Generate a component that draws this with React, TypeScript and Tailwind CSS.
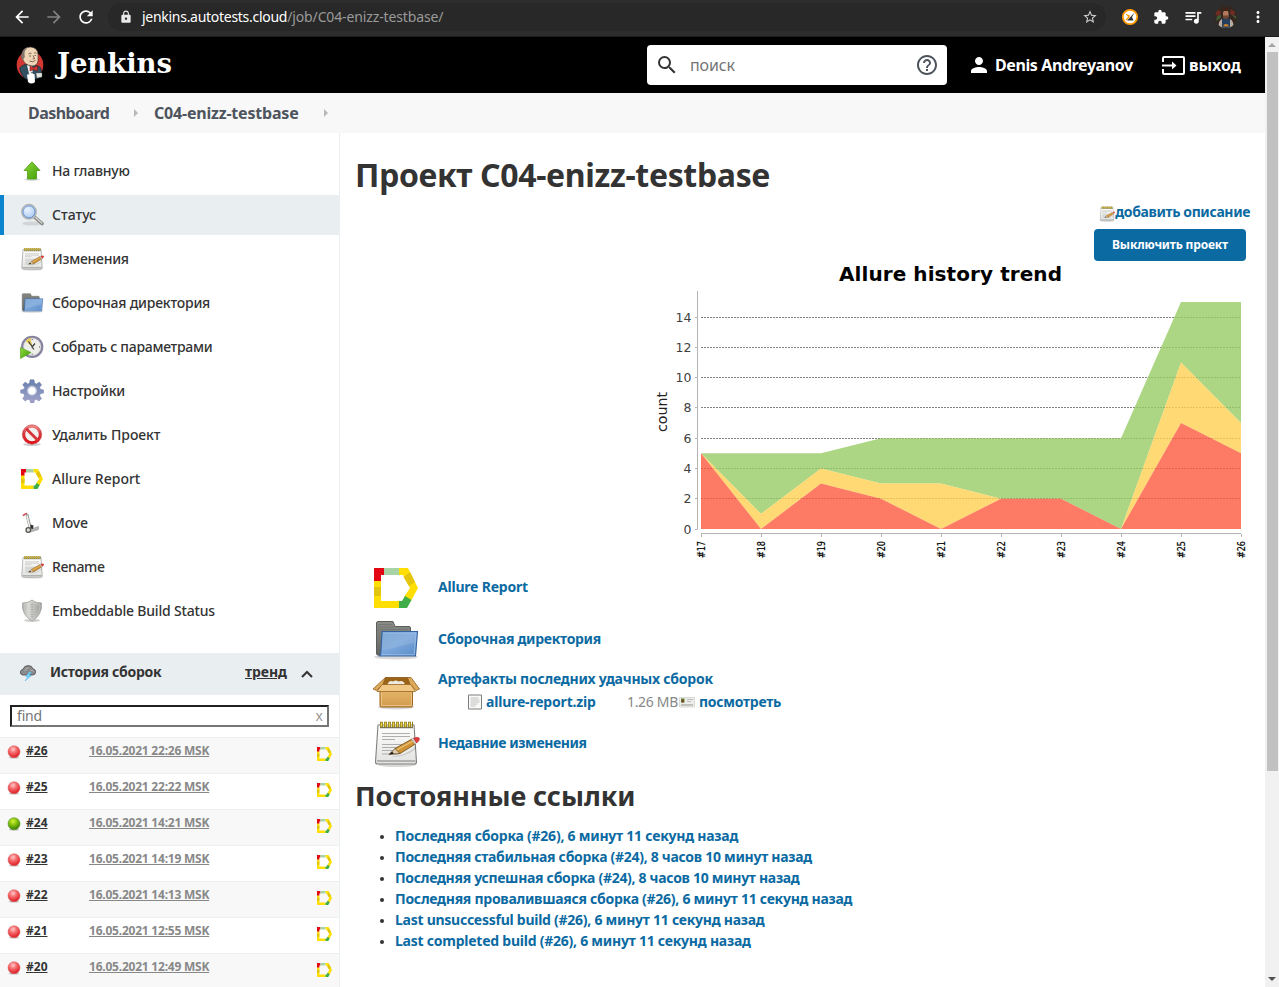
import React from "react";
import type { ReactNode } from "react";
import {
  MdArrowBack,
  MdArrowForward,
  MdRefresh,
  MdLock,
  MdStarBorder,
  MdExtension,
  MdQueueMusic,
  MdMoreVert,
  MdPerson,
  MdSearch,
  MdHelpOutline,
} from "react-icons/md";

/* ---------- shared gradients ---------- */

function Gradients() {
  return (
    <svg className="absolute size-0" aria-hidden="true">
      <defs>
        <linearGradient id="gBlue" x1="0" y1="0" x2="1" y2="1">
          <stop offset="0" stopColor="#729fcf" />
          <stop offset="0.5" stopColor="#7aa6db" />
          <stop offset="1" stopColor="#5b8cc8" />
        </linearGradient>
        <linearGradient id="gDark" x1="0" y1="0" x2="0" y2="1">
          <stop offset="0" stopColor="#8b8d89" />
          <stop offset="1" stopColor="#626461" />
        </linearGradient>
        <linearGradient id="gGreen" x1="0" y1="0" x2="1" y2="1">
          <stop offset="0" stopColor="#8fdc3c" />
          <stop offset="1" stopColor="#3f9a06" />
        </linearGradient>
        <linearGradient id="gPaper" x1="0" y1="0" x2="0" y2="1">
          <stop offset="0" stopColor="#ffffff" />
          <stop offset="1" stopColor="#e2e2e0" />
        </linearGradient>
        <linearGradient id="gRed" x1="0" y1="0" x2="0" y2="1">
          <stop offset="0" stopColor="#ee8585" />
          <stop offset="0.45" stopColor="#d63a3e" />
          <stop offset="1" stopColor="#e01218" />
        </linearGradient>
        <linearGradient id="gBox" x1="0" y1="0" x2="0" y2="1">
          <stop offset="0" stopColor="#e9b96e" />
          <stop offset="1" stopColor="#d19a4c" />
        </linearGradient>
        <linearGradient id="gShield" x1="0" y1="0" x2="1" y2="0">
          <stop offset="0" stopColor="#a3a59f" />
          <stop offset="0.3" stopColor="#d9dad7" />
          <stop offset="1" stopColor="#9c9d98" />
        </linearGradient>
        <linearGradient id="gGear" x1="0" y1="0" x2="0" y2="1">
          <stop offset="0" stopColor="#6780ae" />
          <stop offset="1" stopColor="#a4a3cb" />
        </linearGradient>
        <radialGradient id="gLens" cx="0.4" cy="0.35" r="0.7">
          <stop offset="0" stopColor="#eaf3fe" />
          <stop offset="1" stopColor="#a3c4f0" />
        </radialGradient>
        <radialGradient id="gBallRed" cx="0.42" cy="0.3" r="0.7">
          <stop offset="0" stopColor="#ffc9c9" />
          <stop offset="0.45" stopColor="#f5686a" />
          <stop offset="1" stopColor="#dd1a1f" />
        </radialGradient>
        <radialGradient id="gBallGreen" cx="0.42" cy="0.3" r="0.7">
          <stop offset="0" stopColor="#d8f23a" />
          <stop offset="0.45" stopColor="#86c40c" />
          <stop offset="1" stopColor="#397d04" />
        </radialGradient>
      </defs>
    </svg>
  );
}

/* ---------- icons ---------- */

type IconProps = { className?: string };

function AllureIcon({ className }: IconProps) {
  return (
    <svg viewBox="0 0 44 40" className={className} preserveAspectRatio="none">
      <path d="M0 12h7v21h18v7H0z" fill="#ffde03" />
      <path d="M0 19h7v9H0z" fill="#e3c510" />
      <path d="M0 0h10v7H7v6H0z" fill="#e30613" />
      <path d="M10 0h15v7H10z" fill="#a7d3a6" />
      <path d="M25 0h9l10 20-7 13-7-4 6-9-7-13h-4z" fill="#ffde03" />
      <path d="M36 4l5 10-6 4-5.500-9z" fill="#e3c510" />
      <path d="M37.500 32L33 40h-8v-7h3l3-5z" fill="#3fae49" />
    </svg>
  );
}

function UpIcon({ className }: IconProps) {
  return (
    <svg viewBox="0 0 24 24" className={className}>
      <ellipse cx="12" cy="20.500" rx="8" ry="1.400" fill="#000" opacity="0.14" />
      <path d="M12 2.800L4 11.500H7.500V20H16.500V11.500H20Z" fill="url(#gGreen)" stroke="#4c9c12" strokeWidth="0.8" />
    </svg>
  );
}

function LensIcon({ className }: IconProps) {
  return (
    <svg viewBox="0 0 24 24" className={className}>
      <ellipse cx="12" cy="20.500" rx="10" ry="2" fill="#000" opacity="0.1" />
      <path d="M15 14.500l7 6" stroke="#858783" strokeWidth="3.600" strokeLinecap="round" />
      <path d="M15.500 14.500l6.300 5.500" stroke="#d0d1ce" strokeWidth="1.600" strokeLinecap="round" />
      <circle cx="9" cy="8.800" r="7.200" fill="url(#gLens)" stroke="#b4b6b2" strokeWidth="1.500" />
      <circle cx="9" cy="8.800" r="6" fill="none" stroke="#5f8bd0" strokeWidth="0.900" />
    </svg>
  );
}

function NotepadIcon({ className }: IconProps) {
  return (
    <svg viewBox="0 0 48 48" className={className}>
      <ellipse cx="25" cy="45" rx="19" ry="2" fill="#000" opacity="0.15" />
      <path d="M6 5h36l2.500 37q0 2-2 2H5.500q-2 0-2-2z" fill="url(#gPaper)" stroke="#80827d" strokeWidth="1.100" />
      <path d="M5 41h38.500" stroke="#b2b3b0" strokeWidth="2.200" />
      <path d="M10 13.500h28M10 16.500h28M10 19.500h13M10 24.500h20M10 27.500h15M10 30.500h12M10 34h8" stroke="#a6a7a4" strokeWidth="0.900" />
      <path d="M8 7.500h33" stroke="#77705a" strokeWidth="1.500" />
      <path d="M8 4.500h33" stroke="#8e7c1a" strokeWidth="5.500" strokeDasharray="3 1" />
      <path d="M8.800 4.500h32" stroke="#f0d84e" strokeWidth="4" strokeDasharray="1.400 2.600" />
      <path d="M20 36q14 0 24-10v3q-10 8-23 8z" fill="#000" opacity="0.12" />
      <path d="M23 28.500L40 19l3.500 5L28 33.500l-5.500.5z" fill="#cf9335" stroke="#6f4b16" strokeWidth="0.800" />
      <path d="M24.500 30L41 21" stroke="#edc679" strokeWidth="1.300" />
      <path d="M17 34.500l6-6 5 5z" fill="#e0cba9" stroke="#594529" strokeWidth="0.700" />
      <path d="M17 34.500l3-3 2.200 2.500z" fill="#25211b" />
      <path d="M39.500 19.200l3.500 5 1.700-1.200-3.200-4.800z" fill="#dad9d6" stroke="#8f8f8c" strokeWidth="0.400" />
      <path d="M41.500 18.200q4-1.700 5.700-.2 1.200 2.200-2.500 5z" fill="#e43b3b" stroke="#a32020" strokeWidth="0.500" />
    </svg>
  );
}

function FolderIcon({ className }: IconProps) {
  return (
    <svg viewBox="0 0 48 48" className={className}>
      <ellipse cx="24" cy="41" rx="22" ry="2.500" fill="#000" opacity="0.15" />
      <path d="M4.500 7q0-1.500 1.500-1.500h15l2 5h14q1.500 0 1.500 1.500v27h-33q-1 0-1-2z" fill="url(#gDark)" stroke="#5b5d5a" />
      <path d="M6 8.500h14M6 11h16M6 13.500h30" stroke="#747673" strokeWidth="0.900" />
      <path d="M10 15.500h35.500l-2 24.500H6.500q2 0 2.300-3z" fill="url(#gBlue)" stroke="#36639f" strokeWidth="1.100" />
      <path d="M11 17h33l-1 10q-12 2-21 5-7 2-12 2z" fill="#fff" opacity="0.12" />
      <path d="M11 17h33l-1.800 21.700H9.500" fill="none" stroke="#a6c4e8" strokeWidth="0.700" />
    </svg>
  );
}

function ClockIcon({ className }: IconProps) {
  return (
    <svg viewBox="0 0 24 24" className={className}>
      <circle cx="12.200" cy="11.800" r="10" fill="#eeeeea" stroke="#85829f" strokeWidth="2.300" />
      <circle cx="12.200" cy="11.800" r="8.700" fill="none" stroke="#c8c8c9" strokeWidth="0.700" />
      <path d="M12.200 11.800L5.500 6q2.500-3 5-3.200z" fill="#e7ca59" />
      <path d="M8.500 6.500l4 5.300M15 8.500l-3 3.500 2 2.500" stroke="#3c3d38" strokeWidth="1.200" fill="none" />
      <path d="M12.200 4v1M12.200 18.700v1M19 12h1" stroke="#555" strokeWidth="1" />
      <path d="M.5 12.500v11L11 17.500z" fill="url(#gGreen)" stroke="#4b9e12" strokeWidth="0.600" />
    </svg>
  );
}

function GearIcon({ className }: IconProps) {
  return (
    <svg viewBox="0 0 24 24" className={className}>
      <g fill="url(#gGear)" stroke="#7480ac" strokeWidth="0.500">
        <path d="M10 .7h4l.6 3.400 1.900.8L19.300 3l2.300 2.700-2 2.800.8 1.800 3.200.7v3l-3.200.7-.8 2 2 2.900-2.600 2.500-2.700-1.900-1.900.8-.6 3h-3.200l-.6-3-2-.8-2.800 1.900-2.500-2.500 1.900-2.900-.8-2L.6 14v-3l3.200-.7.8-1.800-1.900-2.800L5.200 3.100l2.600 1.800 1.700-.8z" />
      </g>
      <circle cx="12" cy="11.800" r="4.300" fill="#fff" stroke="#c5cce2" strokeWidth="1.300" />
    </svg>
  );
}

function ForbiddenIcon({ className }: IconProps) {
  return (
    <svg viewBox="0 0 24 24" className={className}>
      <ellipse cx="12" cy="21.600" rx="9" ry="1.400" fill="#000" opacity="0.2" />
      <circle cx="12" cy="11.500" r="8.200" fill="#f4f2f1" stroke="url(#gRed)" strokeWidth="2.900" />
      <path d="M6.200 5.700L17.800 17.300" stroke="#d8353a" strokeWidth="2.900" />
      <circle cx="12" cy="11.500" r="9.700" fill="none" stroke="#c1272c" strokeWidth="0.500" />
    </svg>
  );
}

function TruckIcon({ className }: IconProps) {
  return (
    <svg viewBox="0 0 24 24" className={className}>
      <path d="M3 4.800q2-2.500 4-2.300" stroke="#d44450" strokeWidth="1.700" fill="none" />
      <path d="M6.800 3l3.400 14" stroke="#9a9b99" strokeWidth="3" />
      <path d="M7 4.500l2.800 12" stroke="#efefee" strokeWidth="1.400" />
      <path d="M10 18.500l8.500-3v3L10.500 21z" fill="#b9bab7" stroke="#8e8f8c" strokeWidth="0.600" />
      <path d="M10.500 13.500l3 1-.5 3.500-2.500-.5z" fill="#2f312f" />
      <circle cx="8.300" cy="19" r="2.300" fill="#dedfdd" stroke="#52534f" strokeWidth="1.300" />
    </svg>
  );
}

function ShieldIcon({ className }: IconProps) {
  return (
    <svg viewBox="0 0 24 24" className={className}>
      <ellipse cx="12" cy="21.500" rx="8" ry="1.500" fill="#000" opacity="0.2" />
      <path d="M12 1q3 3 9.500 3 1 12-9.500 18Q1.500 16 2.500 4 9 4 12 1z" fill="url(#gShield)" stroke="#a7a8a4" strokeWidth="0.900" />
      <path d="M12 2.800q3 2.300 8 2.600.3 10-8 15Q4 15 4 5.400q5-.3 8-2.600z" fill="none" stroke="#d6d7d4" strokeWidth="0.500" />
      <path d="M12 5v14" stroke="#8b8d88" strokeWidth="1" strokeDasharray="1 1.500" />
    </svg>
  );
}

function StormIcon({ className }: IconProps) {
  return (
    <svg viewBox="0 0 16 16" className={className}>
      <path d="M2.500 10Q0 9.500.4 6.800.8 4.600 3 4.300 4 .8 8 .6q4 0 5 3.200 2.700.5 2.600 3.300Q15.500 10 12.500 10z" fill="#8a8a8b" stroke="#4c4c4e" strokeWidth="0.800" />
      <path d="M5 6q.5-3 3.500-3.300M10.500 5.500q2-1 3.500 1" stroke="#bababb" strokeWidth="0.900" fill="none" />
      <path d="M9.500 7l-4 4.500 2.500.2L5 16l6.500-5.500-2.500-.3 2.500-3z" fill="#7cd4f8" stroke="#35a8e2" strokeWidth="0.400" />
    </svg>
  );
}

function BoxIcon({ className }: IconProps) {
  return (
    <svg viewBox="0 0 48 48" className={className}>
      <ellipse cx="24" cy="39" rx="18" ry="2.500" fill="#000" opacity="0.15" />
      <path d="M13.500 9.500h22l5.500 9H8.500z" fill="#9a6318" stroke="#825213" strokeWidth="0.800" />
      <path d="M16 15q2-3 5-1.500 3-2 5.500 0 4-1.500 6 1.500v3H15z" fill="#eeeae0" />
      <path d="M8 20h32.500v17.500q0 1.500-1.500 1.500H9.500Q8 39 8 37.500z" fill="url(#gBox)" stroke="#9b6720" />
      <path d="M13.500 9.500L1 21l3.500 1.500L11 16z" fill="#ddaa5c" stroke="#94611d" strokeWidth="0.800" />
      <path d="M35.500 9.500h3.500L47.500 21l-3.500 1.500L38 16z" fill="#ddaa5c" stroke="#94611d" strokeWidth="0.800" />
      <path d="M10 16.500h29l4.500 7H5z" fill="#f1c785" stroke="#9b6720" strokeWidth="0.800" />
      <path d="M9.500 25v12.500h30V25" fill="none" stroke="#f2d19a" strokeWidth="0.700" />
    </svg>
  );
}

function DocIcon({ className }: IconProps) {
  return (
    <svg viewBox="0 0 16 16" className={className}>
      <path d="M1.500 1h13v14h-13z" fill="#fafafa" stroke="#7c7e7a" strokeWidth="1" />
      <path d="M3.500 4h8M3.500 6h9M3.500 8h9M3.500 10h7M3.500 12h5" stroke="#b9bab7" strokeWidth="0.900" />
    </svg>
  );
}

function CardIcon({ className }: IconProps) {
  return (
    <svg viewBox="0 0 16 16" className={className}>
      <path d="M.5 3.500h15v9.500H.5z" fill="#eeeeec" stroke="#cbccc8" strokeWidth="0.700" />
      <path d="M2 4.500h3.500v4H2z" fill="#5c8839" />
      <path d="M2.700 5.500h2v3h-2z" fill="#803d21" />
      <path d="M8 5.500h6M8 7.500h4" stroke="#b5b6b2" strokeWidth="0.900" />
      <path d="M2 11h12" stroke="#939490" strokeWidth="1" />
    </svg>
  );
}

function Ball({ ok }: { ok: boolean }) {
  return (
    <svg viewBox="0 0 14 14" className="size-3.5">
      <ellipse cx="7" cy="12.600" rx="5" ry="1" fill="#000" opacity="0.25" />
      <circle cx="7" cy="6.700" r="6" fill={ok ? "url(#gBallGreen)" : "url(#gBallRed)"} stroke={ok ? "#4c8a10" : "#d9575b"} strokeWidth="0.500" />
    </svg>
  );
}

function JenkinsLogo() {
  return (
    <svg viewBox="0 0 28 38" className="h-[38px] w-7">
      <ellipse cx="14" cy="19" rx="13.300" ry="14" fill="#d33833" />
      <path d="M3.500 22q2.500-3 5.500-3.500l9 1q6 0 7 3l.5 5-3 5-6 1-7-.5q-5-4-6-11z" fill="#335061" stroke="#14212a" strokeWidth="0.600" />
      <path d="M11 19l5 1 1 9-3.500 1z" fill="#f2f2f0" />
      <path d="M6 8Q7 1 14.500 1 22 1.500 22 9v6q-1 5-6 5Q9 19 7 14q-2-2-1-6z" fill="#f0d6b7" stroke="#3b302a" strokeWidth="0.600" />
      <path d="M5.500 9Q6 3 12 1.300 8.500 4 8.500 7.500l.3 3.500L7 14q-2-2-1.500-5z" fill="#82766e" />
      <path d="M12.500 8q1.500-1.500 3-.5M18 7q1.500-.8 2.500.3M13 10h2M18.500 9.500h1.500M17 9.500l1.500 3-1.800.5M13.500 15q3.500 2 6-.8" stroke="#4d392f" strokeWidth="0.700" fill="none" />
      <path d="M14 20l3.500 1.700L21.500 20v5l-4-1.500L14 25z" fill="#d8342e" stroke="#681717" strokeWidth="0.500" />
      <circle cx="16" cy="26.500" r="0.700" fill="#1f2f38" />
      <path d="M11 28.500l7.500-.5.500 8q-3.500 3-7 0z" fill="#fff" />
      <path d="M20 27h6v4l-5 1z" fill="#e9e6e0" stroke="#566" strokeWidth="0.400" />
    </svg>
  );
}

function ExitIcon() {
  return (
    <svg viewBox="0 0 23 19" className="h-[19px] w-[23px]" fill="none" stroke="#fff" strokeWidth="2">
      <path d="M1 6V2q0-1 1-1h19q1 0 1 1v15q0 1-1 1H2q-1 0-1-1v-4" />
      <path d="M0 9.500h11" />
      <path d="M10 5.500l4.500 4-4.500 4z" fill="#fff" stroke="none" />
    </svg>
  );
}

function Avatar() {
  return (
    <svg viewBox="0 0 22 22" className="size-[22px]">
      <clipPath id="avatarClip"><circle cx="11" cy="11" r="11" /></clipPath>
      <g clipPath="url(#avatarClip)">
        <path d="M0 0h22v22H0z" fill="#35271f" />
        <path d="M1 4l5 1-1 5-5-1zM16 3l4 3-1 4-4-2z" fill="#6f2c22" />
        <path d="M2 10l4-1v3l-5 3zM17 9l4 1v3z" fill="#415c34" />
        <path d="M3.500 22q-.5-7 3.500-9h8q4 2 3.500 9z" fill="#b9ada0" />
        <path d="M7 12.500h8V22H7z" fill="#253f5e" />
        <path d="M8.500 19q2.500-2 5 0v1.500h-5z" fill="#c9802a" />
        <path d="M8 5h5.500v6q-2.700 3.500-5.500 0z" fill="#b57a5e" />
        <path d="M8 9.500h5.500V12q-2.700 2-5.500 0z" fill="#6d4533" />
        <path d="M7.500 7q-.5-5 3.300-5t3.200 5l-1-2H9z" fill="#3d2318" />
      </g>
    </svg>
  );
}

function ExtensionBadge() {
  return (
    <svg viewBox="0 0 18 18" className="size-[18px]">
      <circle cx="9" cy="9" r="7.200" fill="#fff" stroke="#f90" strokeWidth="1.800" />
      <path d="M4.500 5.500l4.500 2-1.500 2z" fill="#f90" />
      <path d="M13.500 4.500L8 10.500l-2 2h6.500L11 9z" fill="#333" />
      <path d="M5 12l3.500-3.500" stroke="#f90" strokeWidth="1.300" />
    </svg>
  );
}

/* ---------- browser chrome and header ---------- */

function BrowserBar() {
  return (
    <div className="flex h-[37px] shrink-0 items-center border-b border-[#1c1c1c] bg-[#2d2d2d] pb-0.5 text-white">
      <div className="flex w-[108px] items-center gap-3 pl-3">
        <MdArrowBack className="size-5" />
        <MdArrowForward className="size-5 text-[#828282]" />
        <MdRefresh className="size-5" />
      </div>
      <div className="flex h-7 w-[998px] items-center rounded-full bg-[#282828] pr-2 pl-[11px]">
        <MdLock className="size-3.5 text-[#e8e8e8]" />
        <div className="ml-[9px] flex-1 text-sm">
          <span className="tracking-[-0.28px]">jenkins.autotests.cloud</span>
          <span className="tracking-[-0.13px] text-[#9a9a9a]">/job/C04-enizz-testbase/</span>
        </div>
        <MdStarBorder className="size-4 text-[#d0d0d0]" />
      </div>
      <div className="flex flex-1 items-center pl-[15px]">
        <ExtensionBadge />
        <MdExtension className="ml-3.5 size-4" />
        <MdQueueMusic className="ml-3.5 size-5" />
        <span className="ml-3"><Avatar /></span>
        <MdMoreVert className="ml-3 size-[18px]" />
      </div>
    </div>
  );
}

function Header() {
  return (
    <header className="flex h-14 shrink-0 items-center bg-black text-white">
      <div className="flex w-[647px] items-center gap-[13px] pl-4">
        <JenkinsLogo />
        <span className="pb-0.5 font-['DejaVu_Serif'] text-[27.500px] font-bold tracking-[-0.1px]">Jenkins</span>
      </div>
      <div className="flex h-10 w-[300px] items-center rounded bg-white pr-2 pl-2">
        <MdSearch className="size-6 text-[#333]" />
        <span className="ml-[11px] flex-1 text-base tracking-[-0.1px] text-[#757575]">поиск</span>
        <MdHelpOutline className="size-6 text-[#4d545d]" />
      </div>
      <MdPerson className="ml-5 size-6" />
      <span className="ml-1 w-[167px] text-base font-bold tracking-[-0.4px]">Denis Andreyanov</span>
      <ExitIcon />
      <span className="ml-1 text-base font-bold tracking-[-0.05px]">выход</span>
    </header>
  );
}

function Crumbs() {
  const arrow = <span className="h-0 w-0 border-y-4 border-l-4 border-y-transparent border-l-[#b8b8b8]" />;
  return (
    <nav className="flex h-10 shrink-0 items-center bg-[#f8f8f8] pl-7 text-base font-bold text-[#4d545d]">
      <span className="w-[106px] tracking-[-0.55px]">Dashboard</span>
      {arrow}
      <span className="ml-4 w-[170px] tracking-[-0.2px]">C04-enizz-testbase</span>
      {arrow}
    </nav>
  );
}

/* ---------- sidebar ---------- */

const tasks: { label: string; icon: (p: IconProps) => ReactNode; track: string; active?: boolean }[] = [
  { label: "На главную", icon: UpIcon, track: "tracking-[-0.22px]" },
  { label: "Статус", icon: LensIcon, track: "tracking-normal", active: true },
  { label: "Изменения", icon: NotepadIcon, track: "tracking-[-0.25px]" },
  { label: "Сборочная директория", icon: FolderIcon, track: "tracking-[-0.21px]" },
  { label: "Собрать с параметрами", icon: ClockIcon, track: "tracking-[-0.28px]" },
  { label: "Настройки", icon: GearIcon, track: "tracking-[-0.2px]" },
  { label: "Удалить Проект", icon: ForbiddenIcon, track: "tracking-[-0.05px]" },
  { label: "Allure Report", icon: AllureIcon, track: "tracking-normal" },
  { label: "Move", icon: TruckIcon, track: "tracking-[-0.13px]" },
  { label: "Rename", icon: NotepadIcon, track: "tracking-[-0.4px]" },
  { label: "Embeddable Build Status", icon: ShieldIcon, track: "tracking-[-0.18px]" },
];

const builds = [
  { id: 26, date: "16.05.2021 22:26 MSK", ok: false },
  { id: 25, date: "16.05.2021 22:22 MSK", ok: false },
  { id: 24, date: "16.05.2021 14:21 MSK", ok: true },
  { id: 23, date: "16.05.2021 14:19 MSK", ok: false },
  { id: 22, date: "16.05.2021 14:13 MSK", ok: false },
  { id: 21, date: "16.05.2021 12:55 MSK", ok: false },
  { id: 20, date: "16.05.2021 12:49 MSK", ok: false },
];

function Sidebar() {
  return (
    <aside className="flex w-[340px] shrink-0 flex-col overflow-hidden border-r border-[#eaeff2]">
      <div className="flex flex-col gap-1 pt-[18px]">
        {tasks.map(({ label, icon: Icon, track, active }) => (
          <a
            key={label}
            className={`flex h-10 items-center gap-2 border-l-4 pl-4 text-sm font-medium text-[#333] ${active ? "border-[#0b84d0] bg-[#e9eef1]" : "border-transparent"}`}
          >
            <span className="flex size-6 items-center justify-center">
              <Icon className={label === "Allure Report" ? "h-5 w-[22px]" : "size-6"} />
            </span>
            <span className={track}>{label}</span>
          </a>
        ))}
      </div>
      <div className="mt-[22px] flex h-[42px] shrink-0 items-center bg-[#e9eef1] pb-1 pl-5 text-sm font-bold text-[#333]">
        <StormIcon className="mt-0.5 size-4" />
        <span className="ml-3.5 w-[195px] tracking-[-0.3px]">История сборок</span>
        <span className="tracking-[-0.05px] underline">тренд</span>
        <svg viewBox="0 0 12 8" className="mt-1 ml-3.5 h-2 w-3" fill="none" stroke="#333" strokeWidth="2">
          <path d="M1 7l5-5 5 5" />
        </svg>
      </div>
      <div className="mx-2.5 my-2.5 flex h-[22px] shrink-0 items-center justify-between border-2 border-t-[#212121] border-r-[#767676] border-b-[#767676] border-l-[#212121] pr-1 pl-[5px] text-sm text-[#757575]">
        <span className="tracking-[-0.17px]">find</span>
        <span className="pb-px text-sm text-[#999]">x</span>
      </div>
      {builds.map((b, i) => (
        <div
          key={b.id}
          className={`flex h-9 shrink-0 items-start border-t border-[#eaeff2] pl-[7px] text-xs leading-4 font-bold ${i % 2 ? "bg-white" : "bg-[#f8f8f8]"}`}
        >
          <span className="pt-[7px]"><Ball ok={b.ok} /></span>
          <span className="ml-[5px] w-[63px] pt-[5px] text-[#333] underline">#{b.id}</span>
          <span className="w-[228px] pt-[5px] tracking-[-0.22px] text-[#888] underline">{b.date}</span>
          <AllureIcon className="mt-[9px] h-3.5 w-[15px]" />
        </div>
      ))}
    </aside>
  );
}

/* ---------- trend chart ---------- */

const X = (i: number) => 51 + i * 60;
const Y = (v: number) => 268 - v * 15.13;
const failed = [5, 0, 3, 2, 0, 2, 2, 0, 7, 5];
const broken = [5, 1, 4, 3, 3, 2, 2, 0, 11, 7];
const total = [5, 5, 5, 6, 6, 6, 6, 6, 15, 15];

function area(top: number[], bottom: number[]) {
  const up = top.map((v, i) => `${X(i)},${Y(v)}`);
  const down = bottom.map((v, i) => `${X(i)},${Y(v)}`).reverse();
  return [...up, ...down].join(" ");
}

function TrendChart() {
  const zero = failed.map(() => 0);
  return (
    <svg viewBox="0 0 600 300" className="block h-[300px] w-[600px] font-['DejaVu_Sans']">
      <text x="189" y="20" fontSize="20" fontWeight="700" textLength="223">Allure history trend</text>
      {[2, 4, 6, 8, 10, 12, 14].map((v) => (
        <path key={v} d={`M51 ${Math.floor(Y(v)) + 0.5}H591`} stroke="#808080" strokeWidth="1" strokeDasharray="2 1" />
      ))}
      <g fillOpacity="0.8">
        <polygon points={area(total, broken)} fill="#97cc64" />
        <polygon points={area(broken, failed)} fill="#ffd050" />
        <polygon points={area(failed, zero)} fill="#fd5a3e" />
      </g>
      <path d="M47.500 30V268.500M51 272.500H591" stroke="#b4b4b4" fill="none" />
      {[0, 2, 4, 6, 8, 10, 12, 14].map((v) => (
        <g key={v}>
          <path d={`M45 ${Math.floor(Y(v)) + 0.5}H47`} stroke="#b4b4b4" />
          <text x="41.500" y={Math.floor(Y(v)) + 4.500} fontSize="12.500" textAnchor="end" fill="#404040">{v}</text>
        </g>
      ))}
      {failed.map((_, i) => (
        <g key={i}>
          <path d={`M${X(i) + 0.5} 273V276`} stroke="#b4b4b4" />
          <text
            transform={`translate(${X(i) + 3.5} 297) rotate(-90)`}
            fontSize="10"
            textLength="17"
            lengthAdjust="spacingAndGlyphs"
            stroke="#000"
            strokeWidth="0.2"
          >
            {`#${17 + i}`}
          </text>
        </g>
      ))}
      <text transform="translate(17 171) rotate(-90)" fontSize="14" textLength="40" lengthAdjust="spacingAndGlyphs" fill="#222">count</text>
    </svg>
  );
}

/* ---------- main panel ---------- */

const permalinks = [
  { text: "Последняя сборка (#26), 6 минут 11 секунд назад", track: "tracking-[-0.24px]" },
  { text: "Последняя стабильная сборка (#24), 8 часов 10 минут назад", track: "tracking-[-0.29px]" },
  { text: "Последняя успешная сборка (#24), 8 часов 10 минут назад", track: "tracking-[-0.3px]" },
  { text: "Последняя провалившаяся сборка (#26), 6 минут 11 секунд назад", track: "tracking-[-0.27px]" },
  { text: "Last unsuccessful build (#26), 6 минут 11 секунд назад", track: "tracking-[-0.26px]" },
  { text: "Last completed build (#26), 6 минут 11 секунд назад", track: "tracking-[-0.24px]" },
];

function Row({ icon, children }: { icon: ReactNode; children: ReactNode }) {
  return (
    <div className="flex h-[52px] items-center pl-4">
      <span className="flex w-12 justify-center">{icon}</span>
      <div className="ml-[18px] pb-0.5 text-sm font-bold text-[#0b6aa2]">{children}</div>
    </div>
  );
}

function MainPanel() {
  return (
    <main className="flex-1 pr-[15px] pl-[15px]">
      <h1 className="pt-[18px] text-[32px] leading-[48px] font-bold tracking-[-0.34px] text-[#333]">Проект C04-enizz-testbase</h1>
      <div className="mt-0.5 flex h-[21px] items-center justify-end text-sm font-bold text-[#0b6aa2]">
        <NotepadIcon className="mt-1 size-4" />
        <span className="tracking-[-0.38px]">добавить описание</span>
      </div>
      <div className="flex justify-end pt-[7px] pr-1">
        <button className="h-8 w-[152px] rounded bg-[#0b6aa2] text-xs font-bold tracking-[-0.16px] text-white">Выключить проект</button>
      </div>
      <div className="flex justify-end">
        <TrendChart />
      </div>
      <div className="ml-px pt-px">
        <Row icon={<AllureIcon className="h-10 w-11" />}>
          <span className="tracking-[-0.2px]">Allure Report</span>
        </Row>
        <Row icon={<FolderIcon className="size-12" />}>
          <span className="tracking-[-0.3px]">Сборочная директория</span>
        </Row>
        <Row icon={<BoxIcon className="size-12" />}>
          <div className="-mt-0.5 leading-5 tracking-[-0.24px]">Артефакты последних удачных сборок</div>
          <div className="mt-[3px] flex items-center pl-[29px] leading-5">
            <DocIcon className="size-4" />
            <span className="ml-[3px] w-[141px] tracking-[-0.18px]">allure-report.zip</span>
            <span className="w-[52px] font-normal tracking-[-0.32px] text-[#888]">1.26 MB</span>
            <CardIcon className="size-4" />
            <span className="ml-1 tracking-[-0.27px]">посмотреть</span>
          </div>
        </Row>
        <Row icon={<NotepadIcon className="size-12" />}>
          <span className="tracking-[-0.4px]">Недавние изменения</span>
        </Row>
      </div>
      <h2 className="pt-[7px] text-[27px] leading-[38px] font-bold tracking-[-0.08px] text-[#333]">Постоянные ссылки</h2>
      <ul className="mt-2.5 ml-px text-sm leading-[21px] font-bold text-[#0b6aa2]">
        {permalinks.map((l) => (
          <li key={l.text} className="flex items-center pl-6">
            <span className="mt-0.5 mr-[11px] size-1 rounded-full bg-[#333]" />
            <span className={l.track}>{l.text}</span>
          </li>
        ))}
      </ul>
    </main>
  );
}

function Scrollbar() {
  return (
    <div className="flex w-3.5 shrink-0 flex-col items-center bg-[#f1f1f1]">
      <span className="mt-1.5 h-0 w-0 border-x-4 border-b-4 border-x-transparent border-b-[#a3a3a3]" />
      <span className="mt-[5px] h-[719px] w-[11px] bg-[#c1c1c1]" />
      <span className="mt-auto mb-1.5 h-0 w-0 border-x-4 border-t-4 border-x-transparent border-t-[#505050]" />
    </div>
  );
}

export default function App() {
  return (
    <div className="flex h-screen w-full flex-col overflow-hidden bg-white font-['Noto_Sans',sans-serif]">
      <Gradients />
      <BrowserBar />
      <div className="flex min-h-0 flex-1">
        <div className="flex min-w-0 flex-1 flex-col">
          <Header />
          <Crumbs />
          <div className="flex min-h-0 flex-1">
            <Sidebar />
            <MainPanel />
          </div>
        </div>
        <Scrollbar />
      </div>
    </div>
  );
}
